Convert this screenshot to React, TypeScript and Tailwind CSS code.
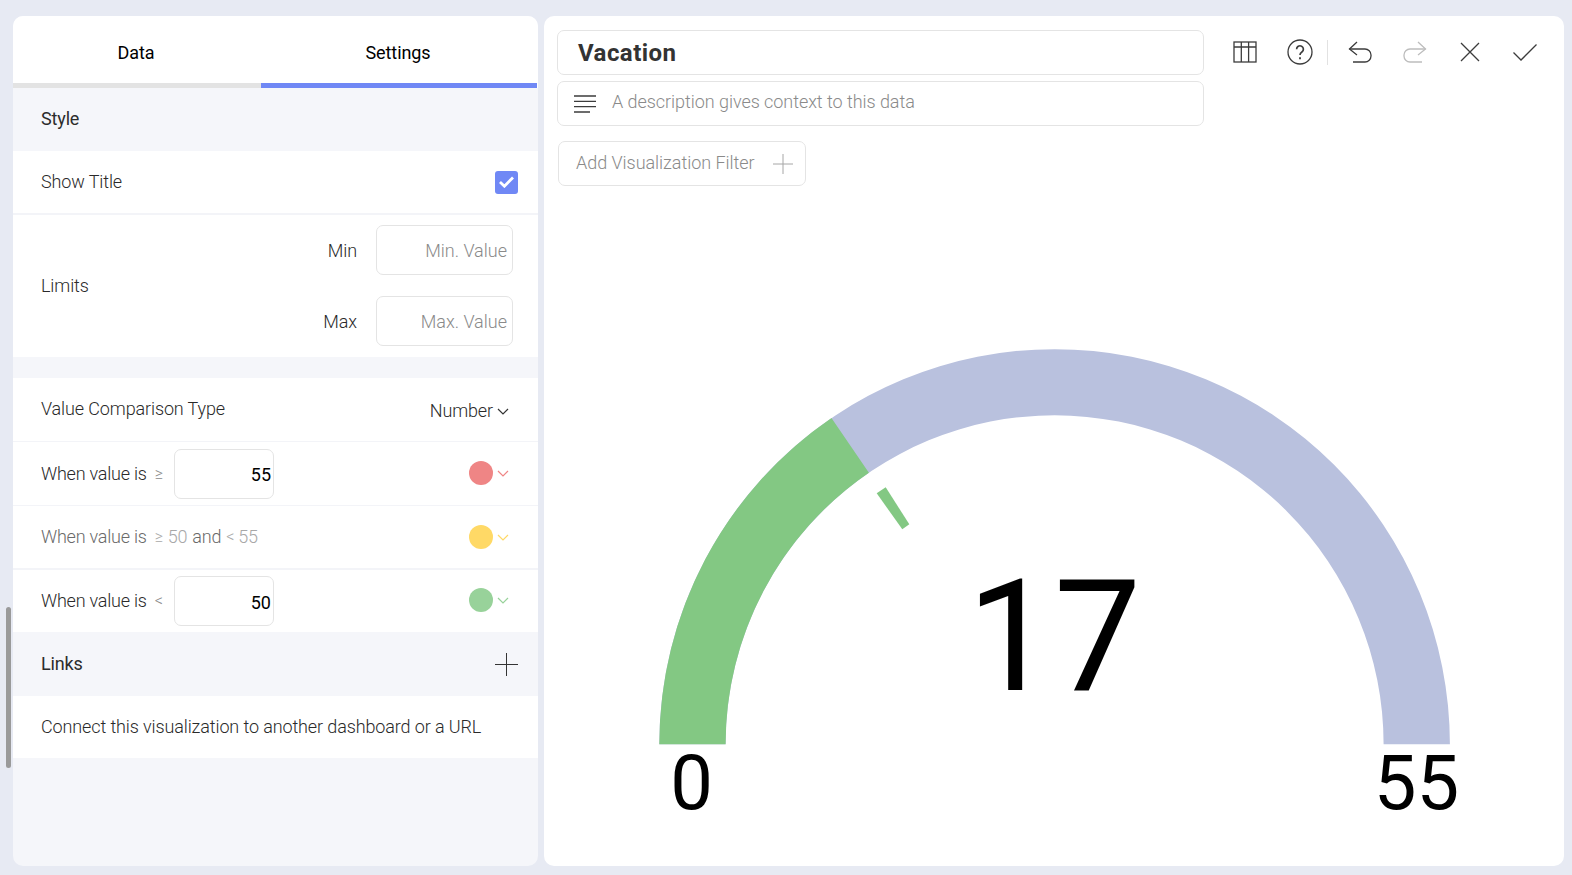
import React from "react";

const rowText = "text-[18px] leading-[24px] font-light tracking-[-0.12px] text-[#2a2a2a]";
const whenText = "text-[18px] leading-[24px] font-light tracking-[-0.22px]";

function Caret({ color }: { color: string }) {
  return (
    <svg width="20" height="20" viewBox="0 0 20 20" fill="none" stroke={color} strokeWidth="1.2">
      <path d="M5 8l5 5 5-5" />
    </svg>
  );
}

function PlusIcon({ size, color }: { size: number; color: string }) {
  return (
    <svg width={size} height={size} viewBox="0 0 24 24" fill="none" stroke={color} strokeWidth={24 / size}>
      <path d="M12 0v24M0 12h24" />
    </svg>
  );
}

function Dot({ bg, caret, lift }: { bg: string; caret: string; lift?: boolean }) {
  return (
    <div className={`ml-auto flex items-center pr-[25px] ${lift ? "pb-[2px]" : ""}`}>
      <span className={`block h-[24px] w-[24px] rounded-full ${bg}`} />
      <Caret color={caret} />
    </div>
  );
}

function NumberBox({ value }: { value: string }) {
  return (
    <div className="ml-[11px] flex h-[50px] w-[100px] items-center justify-end rounded-[7px] border border-[#e4e4e4] bg-white pr-[2px] pt-[2px] text-[18px] text-black">
      {value}
    </div>
  );
}

function LimitRow({ label, hint }: { label: string; hint: string }) {
  return (
    <div className="flex items-center justify-end">
      <span className={`${rowText} mr-[19px] pt-[2px]`}>{label}</span>
      <div className="flex h-[50px] w-[137px] items-center justify-end rounded-[7px] border border-[#e4e4e4] pr-[5px] pt-[2px] text-[18px] font-light text-[#8a8a8a]">
        {hint}
      </div>
    </div>
  );
}

function SettingsPanel() {
  return (
    <aside className="flex h-[850px] w-[525px] flex-col overflow-hidden rounded-[10px] bg-[#f5f6fa]">
      <div className="flex h-[72px] bg-white text-[18px] tracking-[-0.1px] text-black [font-weight:450]">
        <div className="flex w-[248px] items-center justify-center border-b-[5px] border-[#e3e3e3] pr-[2px] pt-[5px]">Data</div>
        <div className="flex w-[276px] items-center justify-center border-b-[5px] border-[#7088f5] pr-[2px] pt-[5px]">Settings</div>
      </div>
      <div className="flex h-[63px] items-center px-[28px] pb-[2px] text-[18px] tracking-[-0.15px] text-[#2c2c2c]">Style</div>
      <div className="flex h-[64px] items-center border-b-2 border-[#f3f4f8] bg-white pl-[28px] pr-[20px]">
        <span className={rowText}>Show Title</span>
        <span className="ml-auto flex h-[23px] w-[23px] items-center justify-center rounded-[3px] bg-[#7088f5]">
          <svg width="15" height="12" viewBox="0 0 15 12" fill="none" stroke="white" strokeWidth="2.8">
            <path d="M1 6l4.4 4.2L14 1.6" />
          </svg>
        </span>
      </div>
      <div className="flex h-[142px] items-center bg-white pb-[2px] pl-[28px] pr-[25px]">
        <span className={`${rowText} pt-[2px]`}>Limits</span>
        <div className="ml-auto flex flex-col gap-[21px]">
          <LimitRow label="Min" hint="Min. Value" />
          <LimitRow label="Max" hint="Max. Value" />
        </div>
      </div>
      <div className="mt-[21px] flex h-[64px] items-center border-b border-[#f3f4f8] bg-white pl-[28px] pr-[25px]">
        <span className={`${rowText} -mt-[2px]`}>Value Comparison Type</span>
        <span className={`${rowText} ml-auto flex items-center pt-[3px]`}>
          Number
          <Caret color="#333333" />
        </span>
      </div>
      <div className="flex h-[64px] items-center border-b border-[#f3f4f8] bg-white pl-[28px]">
        <span className={`${whenText} text-[#2a2a2a]`}>When value is</span>
        <span className="ml-[8px] text-[16px] font-light text-[#8a8a8a]">≥</span>
        <NumberBox value="55" />
        <Dot bg="bg-[#ef8585]" caret="#ef8585" lift />
      </div>
      <div className={`${whenText} flex h-[64px] items-center border-b-2 border-[#f3f4f8] bg-white pl-[28px] text-[#6a6a6a]`}>
        <span>When value is</span>
        <span className="ml-[8px] text-[16px] text-[#a8a8a8]">≥</span>
        <span className="ml-[5px] text-[#a8a8a8]">50</span>
        <span className="ml-[5px]">and</span>
        <span className="ml-[5px] text-[16px] text-[#a8a8a8]">&lt;</span>
        <span className="ml-[4px] text-[#a8a8a8]">55</span>
        <Dot bg="bg-[#ffd966]" caret="#ffd966" />
      </div>
      <div className="flex h-[62px] items-center bg-white pl-[28px]">
        <span className={`${whenText} text-[#2a2a2a]`}>When value is</span>
        <span className="ml-[8px] text-[16px] font-light text-[#8a8a8a]">&lt;</span>
        <NumberBox value="50" />
        <Dot bg="bg-[#98d29a]" caret="#98d29a" lift />
      </div>
      <div className="flex h-[64px] items-center pl-[28px] pr-[20px]">
        <span className="pb-[2px] text-[18px] tracking-[-0.15px] text-[#2c2c2c]">Links</span>
        <span className="ml-auto">
          <PlusIcon size={23} color="#333333" />
        </span>
      </div>
      <div className={`${rowText} flex h-[62px] items-center bg-white pl-[28px]`}>
        Connect this visualization to another dashboard or a URL
      </div>
    </aside>
  );
}

function Toolbar() {
  const stroke = "#3c3c3c";
  return (
    <div className="ml-[13px] flex h-[44px] items-center">
      <button className="flex w-[55px] justify-center">
        <svg width="24" height="22" viewBox="0 0 24 22" fill="none" stroke={stroke} strokeWidth="1.3">
          <rect x="1" y="1" width="22" height="20" />
          <path d="M1 6h22M8.3 1v20M15.6 1v20" />
        </svg>
      </button>
      <button className="flex w-[55px] justify-center">
        <svg width="26" height="26" viewBox="0 0 26 26" fill="none" stroke={stroke} strokeWidth="1.3">
          <circle cx="13" cy="13" r="12" />
          <path d="M9.6 10.2a3.4 3.4 0 1 1 5.3 2.8c-1.2.8-1.9 1.5-1.9 3" strokeWidth="1.7" />
          <path d="M13 18.2v2" strokeWidth="1.8" />
        </svg>
      </button>
      <span className="mr-[4px] block h-[25px] w-px bg-[#e2e2e2]" />
      <button className="flex w-[55px] justify-center">
        <svg width="24" height="22" viewBox="0 0 24 22" fill="none" stroke={stroke} strokeWidth="1.3">
          <path d="M9 1 1.5 8 9 14" />
          <path d="M1.5 8H17a6 6 0 0 1 6 6v1a6 6 0 0 1-6 6H5" />
        </svg>
      </button>
      <button className="flex w-[55px] justify-center">
        <svg width="24" height="22" viewBox="0 0 24 22" fill="none" stroke="#bdbdbd" strokeWidth="1.3">
          <path d="M15 1l7.5 7L15 14" />
          <path d="M22.5 8H7a6 6 0 0 0-6 6v1a6 6 0 0 0 6 6h12" />
        </svg>
      </button>
      <button className="flex w-[55px] justify-center">
        <svg width="20" height="20" viewBox="0 0 20 20" fill="none" stroke={stroke} strokeWidth="1.3">
          <path d="M1 1l18 18M19 1 1 19" />
        </svg>
      </button>
      <button className="flex w-[55px] justify-center">
        <svg width="24" height="17" viewBox="0 0 24 17" fill="none" stroke={stroke} strokeWidth="1.3">
          <path d="M.5 8.5 8 16 23.5.5" />
        </svg>
      </button>
    </div>
  );
}

// page coordinates of the gauge, the viewBox below starts at the panel origin
const cx = 1054.6;
const cy = 744.3;
const outer = 395.3;
const inner = 329;
const value = 17;
const max = 55;

function arc(from: number, to: number) {
  const pt = (r: number, v: number) => {
    const a = (v / max) * Math.PI;
    return `${cx - r * Math.cos(a)} ${cy - r * Math.sin(a)}`;
  };
  return `M${pt(outer, from)} A${outer} ${outer} 0 0 1 ${pt(outer, to)} L${pt(inner, to)} A${inner} ${inner} 0 0 0 ${pt(inner, from)} Z`;
}

function Gauge() {
  return (
    <svg width="1020" height="666" viewBox="544 200 1020 666" className="mt-[14px] block">
      <path d={arc(0, max)} fill="#b9c1de" />
      <path d={arc(0, value)} fill="#83c883" />
      <polygon points="876.7,493.3 885.7,487.3 909.3,524.3 902.3,529.3" fill="#83c883" />
      <text x="1054" y="690" textAnchor="middle" fontSize="155" fill="#000000">17</text>
      <text x="691.5" y="809" textAnchor="middle" fontSize="76" fill="#000000">0</text>
      <text x="1416.5" y="809" textAnchor="middle" fontSize="76" fill="#000000">55</text>
    </svg>
  );
}

function VisualizationPanel() {
  return (
    <main className="ml-[6px] h-[850px] w-[1020px] overflow-hidden rounded-[10px] bg-white">
      <div className="pl-[13px] pt-[14px]">
        <div className="flex items-start">
          <div className="flex h-[45px] w-[647px] items-center rounded-[7px] border border-[#e4e4e4] pl-[20px] text-[24px] font-bold tracking-[0.45px] text-[#333333]">
            Vacation
          </div>
          <Toolbar />
        </div>
        <div className="mt-[6px] flex h-[45px] w-[647px] items-center rounded-[7px] border border-[#e4e4e4] pb-[5px] pl-[16px] text-[18px] font-light tracking-[-0.05px] text-[#8a8a8a]">
          <svg width="22" height="18" viewBox="0 0 22 18" fill="none" stroke="#3c3c3c" strokeWidth="1.3" className="mr-[16px] mt-[5px]">
            <path d="M0 1h22M0 6.3h22M0 11.6h22M0 17h16" />
          </svg>
          A description gives context to this data
        </div>
        <div className="ml-px mt-[15px] flex h-[45px] w-[248px] items-center rounded-[7px] border border-[#e4e4e4] pl-[17px] text-[18px] font-light tracking-[-0.04px] text-[#8a8a8a]">
          <span className="pb-[3px]">Add Visualization Filter</span>
          <span className="ml-[18px]">
            <PlusIcon size={20} color="#a6a6a6" />
          </span>
        </div>
      </div>
      <Gauge />
    </main>
  );
}

export default function App() {
  return (
    <div className="relative flex h-[875px] w-[1572px] overflow-hidden bg-[#e7eaf3] pl-[13px] pt-[16px] [font-family:Roboto,sans-serif]">
      <span className="absolute left-[6px] top-[607px] h-[161px] w-[5px] rounded-full bg-[#9a9a9a]" />
      <SettingsPanel />
      <VisualizationPanel />
    </div>
  );
}
